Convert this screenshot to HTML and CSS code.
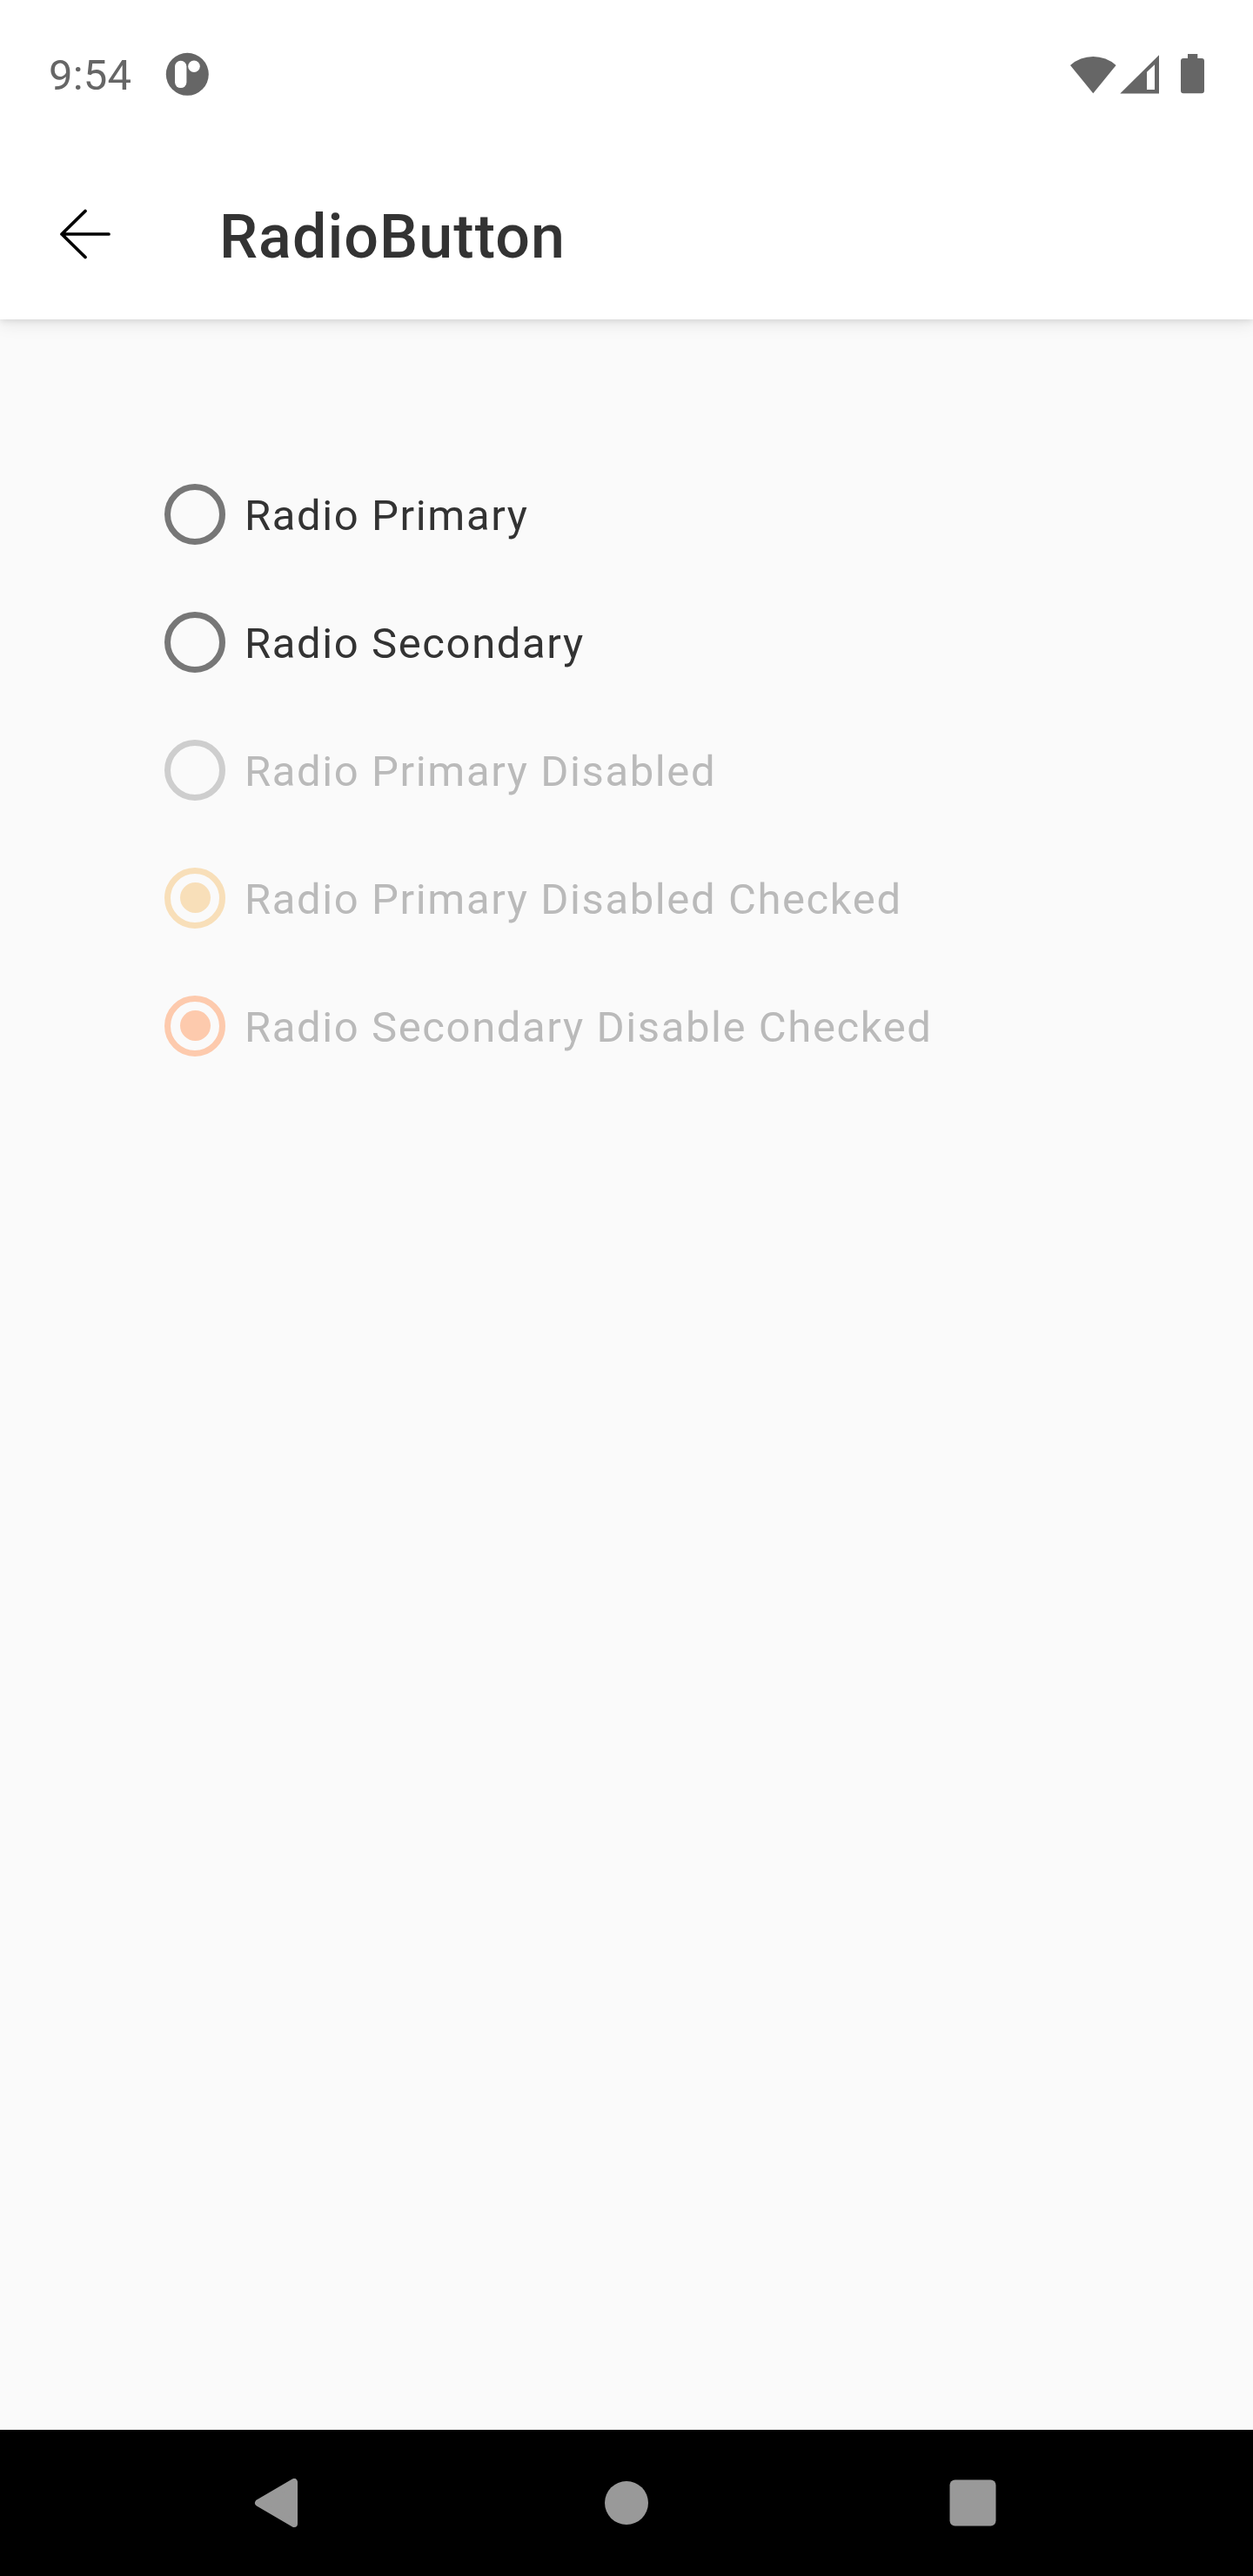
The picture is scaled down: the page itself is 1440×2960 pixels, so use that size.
FILE: index.html
```html
<!DOCTYPE html>
<html lang="en">
<head>
<meta charset="utf-8">
<title>RadioButton</title>
<link rel="stylesheet" href="styles.css">
</head>
<body>
<div class="screen">
  <header class="header">
    <div class="status-bar">
      <span class="clock">9:54</span>
      <svg class="status-app" width="50" height="50" viewBox="0 0 50 50"><circle class="glyph" cx="25.3" cy="25.3" r="24.5"/><rect class="hole" x="11" y="9.7" width="13.4" height="31.4" rx="6.7"/><circle class="hole" cx="33" cy="16.3" r="6.8"/></svg>
      <svg class="status-system" width="156" height="48" viewBox="0 0 156 48"><path class="glyph" d="M2 15A39.5 39.5 0 0 1 54.6 15L28.3 47.3Z"/><path class="glyph" fill-rule="evenodd" d="M59.3 47.6L104 3.3V47.6ZM90 43H99V14.3L90 22.7Z"/><path class="glyph" d="M137 2H148.3V7H153Q156 7 156 10V44.3Q156 47.3 153 47.3H132Q129 47.3 129 44.3V10Q129 7 132 7H137Z"/></svg>
    </div>
    <div class="toolbar">
      <svg class="back" width="60" height="60" viewBox="0 0 60 60"><path d="M57 30H3M30 3.5L3 30L30 56.5"/></svg>
      <h1 class="title">RadioButton</h1>
    </div>
  </header>
  <main class="content">
    <div class="option"><span class="radio"></span><span class="label">Radio Primary</span></div>
    <div class="option"><span class="radio"></span><span class="label">Radio Secondary</span></div>
    <div class="option disabled"><span class="radio"></span><span class="label">Radio Primary Disabled</span></div>
    <div class="option disabled primary"><span class="radio checked"></span><span class="label">Radio Primary Disabled Checked</span></div>
    <div class="option disabled secondary"><span class="radio checked"></span><span class="label">Radio Secondary Disable Checked</span></div>
  </main>
  <nav class="nav-bar">
    <svg width="60" height="56" viewBox="0 0 60 56"><path class="rounded" d="M48 4V52L7 28Z"/></svg>
    <svg width="56" height="56" viewBox="0 0 56 56"><circle cx="28" cy="28" r="25"/></svg>
    <svg width="56" height="56" viewBox="0 0 56 56"><rect x="1.5" y="1.5" width="53" height="53" rx="6"/></svg>
  </nav>
</div>
</body>
</html>
```

FILE: styles.css
```css
* {
  box-sizing: border-box;
}

body {
  margin: 0;
  font-family: Roboto, sans-serif;
}

.screen {
  display: flex;
  flex-direction: column;
  width: 1440px;
  height: 2960px;
  background: #fafafa;
}

.header {
  height: 367px;
  background: #fff;
  box-shadow: 0 6px 18px rgba(0, 0, 0, 0.08), 0 2px 7px rgba(0, 0, 0, 0.09);
}

.status-bar {
  display: flex;
  align-items: flex-start;
  height: 171px;
  padding: 60px 56px 0;
}

.clock {
  margin-top: -2px;
  color: #666;
  font-size: 49px;
  line-height: 58px;
  letter-spacing: 0.2px;
}

.status-app {
  margin-left: 39px;
}

.status-system {
  margin-left: auto;
}

.glyph {
  fill: #666;
}

.hole {
  fill: #fff;
}

.toolbar {
  display: flex;
  align-items: center;
  height: 196px;
  padding-left: 68px;
}

.back {
  fill: none;
  stroke: #000;
  stroke-width: 3.7;
  stroke-linecap: round;
  stroke-linejoin: round;
}

.title {
  margin: 6px 0 0 124px;
  color: #333;
  font-size: 70px;
  font-weight: 500;
  line-height: 82px;
  letter-spacing: 1.05px;
}

.content {
  flex: 1;
  padding: 150px 189px 0;
}

.option {
  display: flex;
  align-items: center;
  height: 147px;
  color: #333;
}

.radio {
  display: flex;
  align-items: center;
  justify-content: center;
  width: 70px;
  height: 70px;
  border: 7px solid #777;
  border-radius: 50%;
}

.label {
  margin: 4px 0 0 22px;
  font-size: 49px;
  line-height: 58px;
  letter-spacing: 1.6px;
}

.checked::before {
  content: "";
  width: 35px;
  height: 35px;
  border-radius: 50%;
}

.disabled {
  color: #bababa;
}

.disabled .radio {
  border-color: #cecece;
}

.primary .radio {
  border-color: #f8dfb9;
}

.primary .checked::before {
  background: #f8dfb9;
}

.secondary .radio {
  border-color: #fdcaad;
}

.secondary .checked::before {
  background: #fdcaad;
}

.nav-bar {
  display: flex;
  align-items: center;
  justify-content: space-between;
  height: 168px;
  padding: 0 294px 0 290px;
  background: #000;
  fill: #999;
}

.rounded {
  stroke: #999;
  stroke-width: 8px;
  stroke-linejoin: round;
}
```
